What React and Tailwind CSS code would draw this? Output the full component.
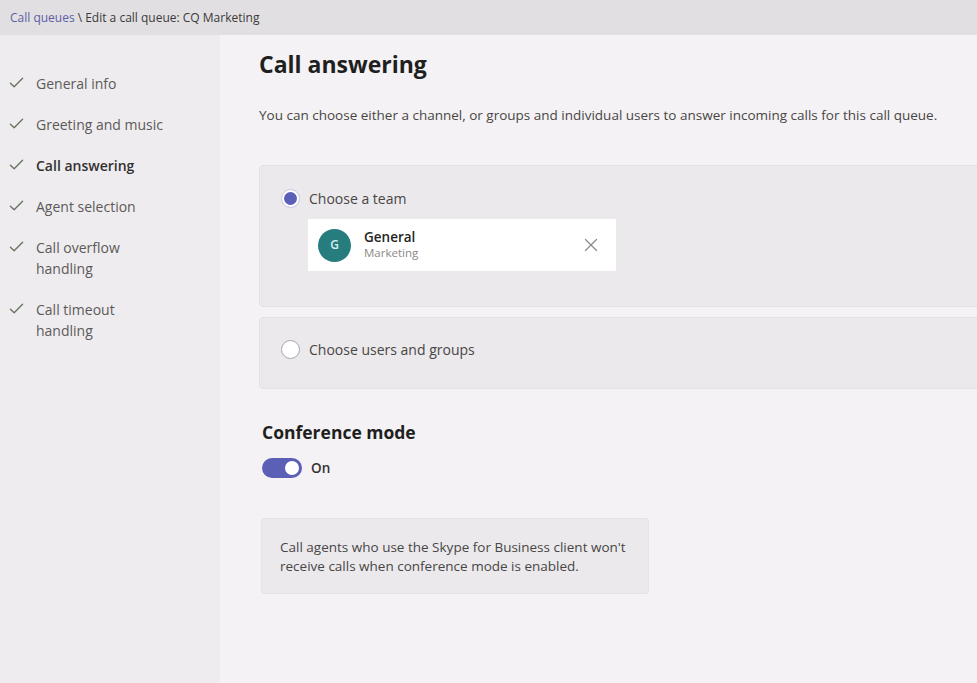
import React from 'react';

const steps = [
  { label: 'General info' },
  { label: 'Greeting and music' },
  { label: 'Call answering', active: true },
  { label: 'Agent selection' },
  { label: 'Call overflow handling', lines: ['Call overflow', 'handling'] },
  { label: 'Call timeout handling', lines: ['Call timeout', 'handling'] },
];

const Check = () => (
  <svg className="w-[15px] h-[15px] mt-[2px] shrink-0" viewBox="0 0 16 16" fill="none">
    <path d="M1.5 8.8l4 3.8L14.5 3.5" stroke="#66725f" strokeWidth="1.4" strokeLinecap="round" strokeLinejoin="round" />
  </svg>
);

const Radio = ({ checked }) =>
  checked ? (
    <span className="w-[19px] h-[19px] rounded-full border border-[#c9c6e4] bg-white flex items-center justify-center">
      <span className="w-[13px] h-[13px] rounded-full bg-[#5b5fb8]" />
    </span>
  ) : (
    <span className="w-[19px] h-[19px] rounded-full border border-[#a9a6b4] bg-white" />
  );

const App = () => {
  return (
    <div
      className="w-[977px] h-[683px] overflow-hidden flex flex-col bg-[#f4f2f4] text-[#252423]"
      style={{ fontFamily: '"Open Sans", "Noto Sans", sans-serif' }}
    >
      {/* breadcrumb */}
      <div className="h-[35px] shrink-0 bg-[#e1dfe1] flex items-center px-[10px] text-[12px] text-[#3b3a39]">
        <span className="text-[#5c5ea6]">Call queues</span>
        <span className="ml-[3px]">\ Edit a call queue: CQ Marketing</span>
      </div>

      <div className="flex flex-1 min-h-0">
        {/* left nav */}
        <div className="w-[220px] shrink-0 bg-[#eeecef] pt-[38px] pl-[9px]">
          <ul className="flex flex-col gap-[20px]">
            {steps.map((s) => (
              <li key={s.label} className="flex gap-[12px]">
                <Check />
                <div
                  className={`text-[14px] leading-[21px] ${
                    s.active ? 'font-semibold text-[#323130]' : 'text-[#5c5a58]'
                  }`}
                >
                  {(s.lines || [s.label]).map((l) => (
                    <div key={l}>{l}</div>
                  ))}
                </div>
              </li>
            ))}
          </ul>
        </div>

        {/* main */}
        <div className="flex-1 pl-[39px] pt-[13px]">
          <h1 className="text-[23px] font-bold leading-[32px] text-[#201f1e]">Call answering</h1>
          <p className="mt-[25px] text-[13.5px] leading-[20px] text-[#484644] whitespace-nowrap">
            You can choose either a channel, or groups and individual users to answer incoming calls for this call queue.
          </p>

          <div className="mt-[40px] -mr-[10px] flex flex-col gap-[10px]">
            <div className="h-[142px] rounded-[4px] bg-[#ebe9ec] border border-[#e3e1e4] pl-[21px] pt-[22px]">
              <label className="flex items-center gap-[9px]">
                <Radio checked />
                <span className="text-[14px] text-[#484644]">Choose a team</span>
              </label>
              <div className="mt-[10px] ml-[27px] w-[308px] h-[52px] bg-white flex items-center pl-[10px] pr-[18px]">
                <div className="w-[33px] h-[33px] rounded-full bg-[#277d7e] flex items-center justify-center text-[#d8f0ef] text-[12px] font-semibold">
                  G
                </div>
                <div className="ml-[13px] flex-1 leading-[16px]">
                  <div className="text-[13.5px] font-semibold text-[#252423]">General</div>
                  <div className="text-[11.5px] text-[#8a8886]">Marketing</div>
                </div>
                <svg className="w-[14px] h-[14px]" viewBox="0 0 14 14" fill="none">
                  <path d="M1.5 1.5l11 11M12.5 1.5l-11 11" stroke="#8a8886" strokeWidth="1.2" strokeLinecap="round" />
                </svg>
              </div>
            </div>

            <div className="h-[72px] rounded-[4px] bg-[#ebe9ec] border border-[#e3e1e4] pl-[21px] pt-[21px]">
              <label className="flex items-center gap-[9px]">
                <Radio />
                <span className="text-[14px] text-[#484644]">Choose users and groups</span>
              </label>
            </div>
          </div>

          <div className="ml-[3px] mt-[31px]">
            <h2 className="text-[17.5px] font-bold leading-[24px] text-[#201f1e]">Conference mode</h2>
            <div className="mt-[14px] flex items-center gap-[9px]">
              <span className="w-[40px] h-[20px] rounded-full bg-[#5b5fb5] flex items-center justify-end pr-[3px]">
                <span className="w-[14px] h-[14px] rounded-full bg-white" />
              </span>
              <span className="text-[13.5px] font-semibold text-[#323130]">On</span>
            </div>

            <div className="mt-[40px] -ml-[1px] w-[388px] h-[76px] rounded-[3px] bg-[#ebe9ec] border border-[#e5e3e6] pl-[18px] pt-[19px] text-[13.5px] leading-[19px] text-[#484644]">
              Call agents who use the Skype for Business client won't receive calls when conference mode is enabled.
            </div>
          </div>
        </div>
      </div>
    </div>
  );
};

export default App;
